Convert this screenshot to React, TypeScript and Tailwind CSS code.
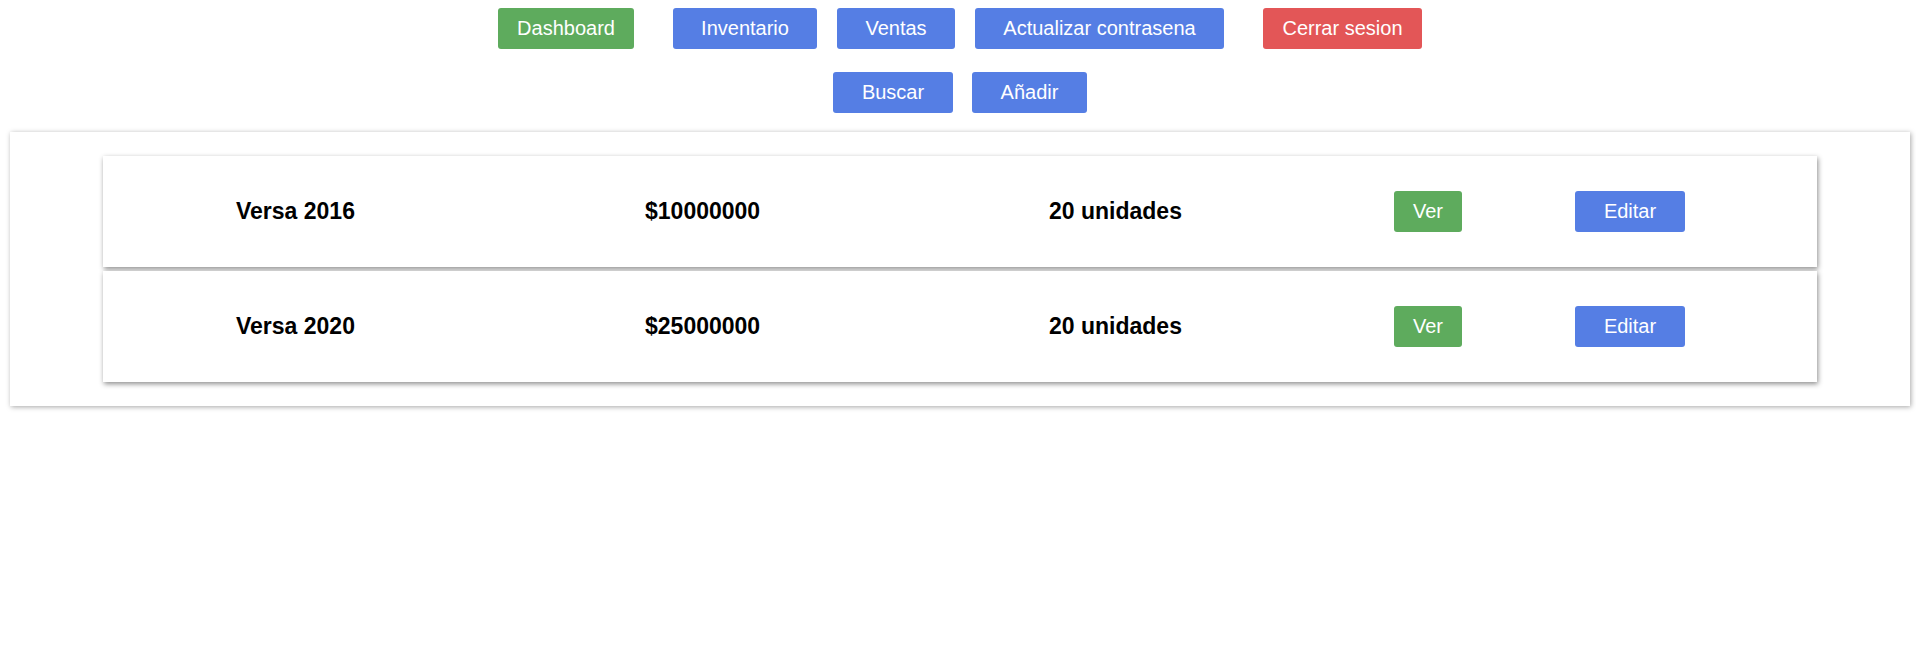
const font = { fontFamily: '"Liberation Sans", Arial, sans-serif' };

interface Product {
  name: string;
  price: number;
  stock: number;
}

const products: Product[] = [
  { name: "Versa 2016", price: 10000000, stock: 20 },
  { name: "Versa 2020", price: 25000000, stock: 20 },
];

const NavButton = ({
  label,
  color,
  className = "",
}: {
  label: string;
  color: string;
  className?: string;
}) => (
  <button
    className={`h-[41px] rounded-[3px] pb-[2px] text-[20px] text-white leading-none ${color} ${className}`}
  >
    {label}
  </button>
);

// columns are pinned by width so the next item starts where the reference has it
const ProductCard = ({ product }: { product: Product }) => (
  <div className="flex h-[111px] w-[1714px] items-center bg-white pl-[133px] shadow-[1px_2px_5px_rgba(0,0,0,0.45)]">
    <h3 className="w-[409px] whitespace-nowrap text-[23px] font-bold text-black">
      {product.name}
    </h3>
    <h3 className="w-[404px] whitespace-nowrap text-[23px] font-bold text-black">
      ${product.price}
    </h3>
    <h3 className="w-[345px] whitespace-nowrap text-[23px] font-bold text-black">
      {product.stock} unidades
    </h3>
    <NavButton label="Ver" color="bg-[#5eab5d]" className="w-[68px]" />
    <NavButton label="Editar" color="bg-[#557ee4]" className="ml-[113px] w-[110px]" />
  </div>
);

export default function App() {
  return (
    <div className="min-h-screen bg-white" style={font}>
      <nav className="flex flex-col items-center pl-[4px] pt-[8px]">
        <div className="flex items-center gap-[20px]">
          <NavButton label="Dashboard" color="bg-[#5eab5d]" className="mr-[19px] w-[136px]" />
          <NavButton label="Inventario" color="bg-[#557ee4]" className="w-[144px]" />
          <NavButton label="Ventas" color="bg-[#557ee4]" className="w-[118px]" />
          <NavButton label="Actualizar contrasena" color="bg-[#557ee4]" className="w-[249px]" />
          <NavButton label="Cerrar sesion" color="bg-[#e35657]" className="ml-[19px] w-[159px]" />
        </div>
        <div className="mt-[23px] flex items-center gap-[19px]">
          <NavButton label="Buscar" color="bg-[#557ee4]" className="w-[120px]" />
          <NavButton label="Añadir" color="bg-[#557ee4]" className="w-[115px]" />
        </div>
      </nav>

      <section className="ml-[10px] mt-[19px] flex w-[1900px] flex-col items-center gap-[4px] bg-white py-[24px] shadow-[1px_1px_5px_rgba(0,0,0,0.35)]">
        {products.map((p) => (
          <ProductCard key={p.name} product={p} />
        ))}
      </section>
    </div>
  );
}
